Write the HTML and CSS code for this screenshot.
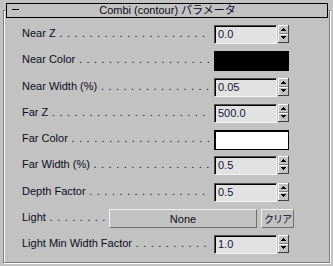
FILE: index.html
```html
<!DOCTYPE html>
<html>
<head>
<meta charset="utf-8">
<link rel="stylesheet" href="styles.css">
</head>
<body>
<div class="frame">
  <div class="titlebar">
    <span class="minus"></span>
    <span class="title">Combi (contour) パラメータ</span>
  </div>
  <div class="rows">
    <div class="row">
      <span class="label">Near Z</span><span class="leader"></span>
      <div class="spin"><span class="field">0.0</span><svg class="arrows" width="11" height="18" viewBox="0 0 11 18" shape-rendering="crispEdges"><rect width="11" height="18" fill="#c2c2c2"/><rect x="0" y="0" width="10" height="1" fill="#fff"/><rect x="0" y="0" width="1" height="17" fill="#fff"/><rect x="10" y="0" width="1" height="18" fill="#404040"/><rect x="0" y="17" width="11" height="1" fill="#404040"/><rect x="1" y="8" width="9" height="1" fill="#808080"/><rect x="1" y="9" width="9" height="1" fill="#fff"/><rect x="5" y="3" width="1" height="1" fill="#000"/><rect x="4" y="4" width="3" height="1" fill="#000"/><rect x="3" y="5" width="5" height="1" fill="#000"/><rect x="3" y="11" width="5" height="1" fill="#000"/><rect x="4" y="12" width="3" height="1" fill="#000"/><rect x="5" y="13" width="1" height="1" fill="#000"/></svg></div>
    </div>
    <div class="row tall">
      <span class="label">Near Color</span><span class="leader"></span>
      <div class="swatch swatch-black"></div>
    </div>
    <div class="row">
      <span class="label">Near Width (%)</span><span class="leader"></span>
      <div class="spin"><span class="field">0.05</span><svg class="arrows" width="11" height="18" viewBox="0 0 11 18" shape-rendering="crispEdges"><rect width="11" height="18" fill="#c2c2c2"/><rect x="0" y="0" width="10" height="1" fill="#fff"/><rect x="0" y="0" width="1" height="17" fill="#fff"/><rect x="10" y="0" width="1" height="18" fill="#404040"/><rect x="0" y="17" width="11" height="1" fill="#404040"/><rect x="1" y="8" width="9" height="1" fill="#808080"/><rect x="1" y="9" width="9" height="1" fill="#fff"/><rect x="5" y="3" width="1" height="1" fill="#000"/><rect x="4" y="4" width="3" height="1" fill="#000"/><rect x="3" y="5" width="5" height="1" fill="#000"/><rect x="3" y="11" width="5" height="1" fill="#000"/><rect x="4" y="12" width="3" height="1" fill="#000"/><rect x="5" y="13" width="1" height="1" fill="#000"/></svg></div>
    </div>
    <div class="row">
      <span class="label">Far Z</span><span class="leader"></span>
      <div class="spin"><span class="field">500.0</span><svg class="arrows" width="11" height="18" viewBox="0 0 11 18" shape-rendering="crispEdges"><rect width="11" height="18" fill="#c2c2c2"/><rect x="0" y="0" width="10" height="1" fill="#fff"/><rect x="0" y="0" width="1" height="17" fill="#fff"/><rect x="10" y="0" width="1" height="18" fill="#404040"/><rect x="0" y="17" width="11" height="1" fill="#404040"/><rect x="1" y="8" width="9" height="1" fill="#808080"/><rect x="1" y="9" width="9" height="1" fill="#fff"/><rect x="5" y="3" width="1" height="1" fill="#000"/><rect x="4" y="4" width="3" height="1" fill="#000"/><rect x="3" y="5" width="5" height="1" fill="#000"/><rect x="3" y="11" width="5" height="1" fill="#000"/><rect x="4" y="12" width="3" height="1" fill="#000"/><rect x="5" y="13" width="1" height="1" fill="#000"/></svg></div>
    </div>
    <div class="row">
      <span class="label">Far Color</span><span class="leader"></span>
      <div class="swatch swatch-white"></div>
    </div>
    <div class="row tall">
      <span class="label">Far Width (%)</span><span class="leader"></span>
      <div class="spin"><span class="field">0.5</span><svg class="arrows" width="11" height="18" viewBox="0 0 11 18" shape-rendering="crispEdges"><rect width="11" height="18" fill="#c2c2c2"/><rect x="0" y="0" width="10" height="1" fill="#fff"/><rect x="0" y="0" width="1" height="17" fill="#fff"/><rect x="10" y="0" width="1" height="18" fill="#404040"/><rect x="0" y="17" width="11" height="1" fill="#404040"/><rect x="1" y="8" width="9" height="1" fill="#808080"/><rect x="1" y="9" width="9" height="1" fill="#fff"/><rect x="5" y="3" width="1" height="1" fill="#000"/><rect x="4" y="4" width="3" height="1" fill="#000"/><rect x="3" y="5" width="5" height="1" fill="#000"/><rect x="3" y="11" width="5" height="1" fill="#000"/><rect x="4" y="12" width="3" height="1" fill="#000"/><rect x="5" y="13" width="1" height="1" fill="#000"/></svg></div>
    </div>
    <div class="row">
      <span class="label">Depth Factor</span><span class="leader"></span>
      <div class="spin"><span class="field">0.5</span><svg class="arrows" width="11" height="18" viewBox="0 0 11 18" shape-rendering="crispEdges"><rect width="11" height="18" fill="#c2c2c2"/><rect x="0" y="0" width="10" height="1" fill="#fff"/><rect x="0" y="0" width="1" height="17" fill="#fff"/><rect x="10" y="0" width="1" height="18" fill="#404040"/><rect x="0" y="17" width="11" height="1" fill="#404040"/><rect x="1" y="8" width="9" height="1" fill="#808080"/><rect x="1" y="9" width="9" height="1" fill="#fff"/><rect x="5" y="3" width="1" height="1" fill="#000"/><rect x="4" y="4" width="3" height="1" fill="#000"/><rect x="3" y="5" width="5" height="1" fill="#000"/><rect x="3" y="11" width="5" height="1" fill="#000"/><rect x="4" y="12" width="3" height="1" fill="#000"/><rect x="5" y="13" width="1" height="1" fill="#000"/></svg></div>
    </div>
    <div class="row">
      <span class="label">Light</span><span class="leader"></span>
      <button class="btn btn-none">None</button>
      <button class="btn btn-clear">クリア</button>
    </div>
    <div class="row">
      <span class="label">Light Min Width Factor</span><span class="leader"></span>
      <div class="spin"><span class="field">1.0</span><svg class="arrows" width="11" height="18" viewBox="0 0 11 18" shape-rendering="crispEdges"><rect width="11" height="18" fill="#c2c2c2"/><rect x="0" y="0" width="10" height="1" fill="#fff"/><rect x="0" y="0" width="1" height="17" fill="#fff"/><rect x="10" y="0" width="1" height="18" fill="#404040"/><rect x="0" y="17" width="11" height="1" fill="#404040"/><rect x="1" y="8" width="9" height="1" fill="#808080"/><rect x="1" y="9" width="9" height="1" fill="#fff"/><rect x="5" y="3" width="1" height="1" fill="#000"/><rect x="4" y="4" width="3" height="1" fill="#000"/><rect x="3" y="5" width="5" height="1" fill="#000"/><rect x="3" y="11" width="5" height="1" fill="#000"/><rect x="4" y="12" width="3" height="1" fill="#000"/><rect x="5" y="13" width="1" height="1" fill="#000"/></svg></div>
    </div>
  </div>
</div>
</body>
</html>
```
FILE: styles.css
```css
html, body {
  margin: 0;
  padding: 0;
  background: #c2c2c2;
  width: 333px;
  height: 266px;
  overflow: hidden;
  font-family: "Liberation Sans", "Noto Sans CJK JP", sans-serif;
  font-size: 11px;
  color: #0c0c1c;
}

.frame {
  box-sizing: border-box;
  margin: 10px 0 0 3px;
  width: 327px;
  height: 253px;
  border: 1px solid #808080;
  box-shadow: inset 1px 1px 0 #fff, 1px 1px 0 #fff;
}

.titlebar {
  box-sizing: border-box;
  margin: -8px 1px 0 2px;
  height: 15px;
  border: 1px solid #000;
  background: #c2c2c2;
  display: flex;
  align-items: center;
  position: relative;
}

.minus {
  position: absolute;
  left: 5px;
  top: 5px;
  width: 7px;
  height: 1px;
  background: #000;
}

.title {
  flex: 1;
  text-align: center;
  line-height: 13px;
  padding-left: 1px;
}

.rows {
  padding: 4px 40px 0 18px;
}

.row {
  display: flex;
  align-items: flex-start;
  height: 26px;
}

.row.tall {
  height: 27px;
}

.label {
  margin-top: 3px;
  line-height: 16px;
  white-space: nowrap;
}

.leader {
  flex: 1;
  margin-top: 3px;
  margin-right: 4px;
  line-height: 16px;
  overflow: hidden;
  white-space: nowrap;
  min-width: 0;
}

.leader::before {
  content: " . . . . . . . . . . . . . . . . . . . . . . . . . . . . . . . . . . . . . . . .";
  letter-spacing: 0.7px;
  white-space: pre;
}

.spin {
  margin-top: 3px;
  display: flex;
  gap: 1px;
  width: 75px;
}

.field {
  box-sizing: border-box;
  width: 63px;
  height: 19px;
  background: #e2e2e2;
  border-style: solid;
  border-width: 1px;
  border-color: #505050 #f4f4f4 #f4f4f4 #505050;
  box-shadow: inset 1px 1px 0 #000;
  padding: 1px 0 0 3px;
  line-height: 15px;
  color: #14143a;
}

.arrows {
  display: block;
}

.swatch {
  box-sizing: border-box;
  margin-top: 3px;
  width: 75px;
  height: 20px;
}

.swatch-black {
  background: #000;
}

.swatch-white {
  background: #fff;
  border: 1px solid #000;
  border-top-width: 2px;
  border-left-width: 2px;
}

.btn {
  box-sizing: border-box;
  margin: 3px 0 0 0;
  height: 19px;
  padding: 1px 0 0 0;
  background: #c2c2c2;
  border-style: solid;
  border-width: 1px;
  border-color: #f2f2f2 #707070 #707070 #f2f2f2;
  font-family: "Liberation Sans", "Noto Sans CJK JP", sans-serif;
  font-size: 11px;
  line-height: 15px;
  color: #0c0c1c;
  text-align: center;
  white-space: nowrap;
  overflow: hidden;
}

.btn-none {
  width: 148px;
}

.btn-clear {
  width: 33px;
  margin-left: 4px;
  margin-right: -5px;
  font-size: 10px;
  letter-spacing: -1px;
}
```
